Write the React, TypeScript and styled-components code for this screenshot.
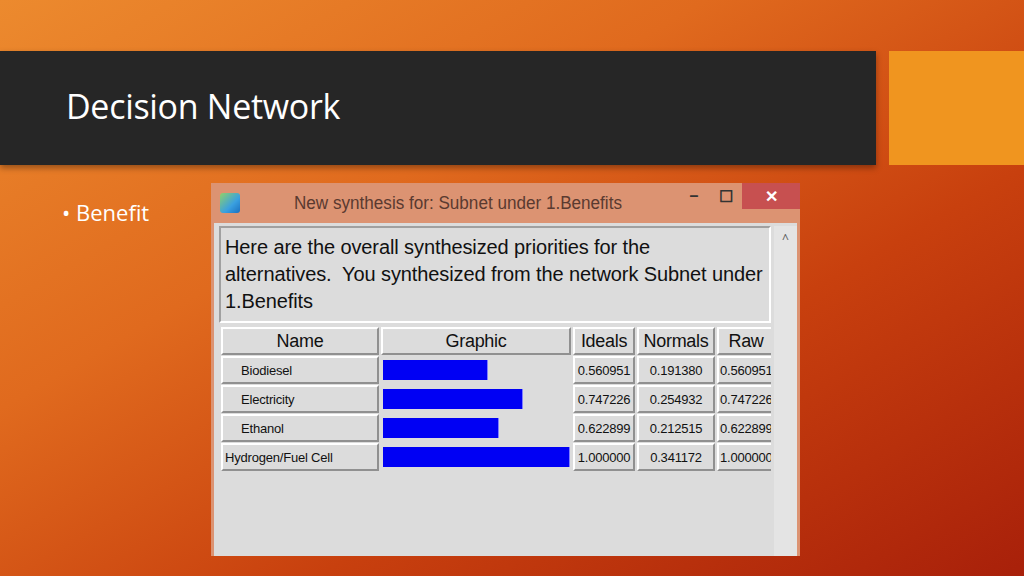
import React from "react";
import styled, { createGlobalStyle } from "styled-components";

const Global = createGlobalStyle`
  html, body { margin: 0; padding: 0; }
  body { font-family: "Open Sans", "Liberation Sans", sans-serif; }
`;

const Slide = styled.div`
  width: 1024px;
  height: 576px;
  overflow: hidden;
  background: linear-gradient(150deg, #ec8a2e 0%, #e06a1e 35%, #c8400e 65%, #a8200a 100%);
  display: flex;
  flex-direction: column;
  padding: 51px 0 20px;
  box-sizing: border-box;
`;

const HeaderRow = styled.div`
  display: flex;
  height: 114px;
  gap: 13px;
`;

const TitleBar = styled.div`
  width: 876px;
  background: #262626;
  display: flex;
  align-items: center;
  padding-left: 66px;
  box-sizing: border-box;
  box-shadow: 0 3px 6px rgba(0, 0, 0, 0.35);
`;

const Title = styled.h1`
  margin: 0;
  color: #ffffff;
  font-family: "Open Sans", "Liberation Sans", sans-serif;
  font-weight: normal;
  font-size: 34px;
  margin-top: -4px;
  letter-spacing: -0.3px;
`;

const Accent = styled.div`
  flex: 1;
  background: #f0951f;
`;

const Body = styled.div`
  display: flex;
  margin-top: 18px;
  flex: 1;
  min-height: 0;
`;

const Bullet = styled.div`
  width: 211px;
  padding: 14px 0 0 62px;
  box-sizing: border-box;
  color: #ffffff;
  font-family: "Open Sans", "Liberation Sans", sans-serif;
  font-size: 22px;
`;

const Win = styled.div`
  width: 589px;
  display: flex;
  flex-direction: column;
  background: #dcdcdc;
`;

const WinTitle = styled.div`
  height: 40px;
  background: #dc9372;
  display: flex;
  align-items: center;
  font-family: "Liberation Sans", sans-serif;
  font-size: 18px;
  color: #5a3a30;
`;

const AppIcon = styled.div`
  width: 20px;
  height: 20px;
  margin: 0 54px 0 9px;
  border-radius: 3px;
  background: linear-gradient(135deg, #8fd06a 0%, #3aa0e0 60%, #1a70c0 100%);
`;

const TitleText = styled.div`
  flex: 1;
  transform: scaleX(0.95);
  transform-origin: left;
`;

const Ctrl = styled.div<{ close?: boolean }>`
  width: ${(p) => (p.close ? "58px" : "32px")};
  height: 26px;
  align-self: flex-start;
  display: flex;
  align-items: center;
  justify-content: center;
  color: ${(p) => (p.close ? "#fff" : "#333")};
  background: ${(p) => (p.close ? "#c75050" : "transparent")};
  font-size: 16px;
  font-weight: bold;
`;

const Side = styled.div`
  border: 3px solid #dc9372;
  border-top: 0;
  border-bottom: 0;
  flex: 1;
  display: flex;
  padding: 3px 0 0 5px;
`;

const Main = styled.div`
  width: 552px;
  display: flex;
  flex-direction: column;
  gap: 4px;
`;

const Scroll = styled.div`
  flex: 1;
  margin-left: 3px;
  background: #e4e4e4;
  display: flex;
  justify-content: center;
  font-size: 12px;
  color: #555;
  padding-top: 4px;
`;

const Info = styled.div`
  height: 97px;
  box-sizing: border-box;
  border: 2px solid #a0a0a0;
  border-right-color: #fff;
  border-bottom-color: #fff;
  padding: 6px 4px;
  font-family: "Liberation Sans", Arial, sans-serif;
  font-size: 20px;
  line-height: 27px;
  color: #111;
  letter-spacing: -0.1px;
`;

const Grid = styled.div`
  display: grid;
  grid-template-columns: 158px 190px 62px 78px 58px;
  grid-auto-rows: 28px;
  gap: 1px 2px;
  padding-left: 2px;
  overflow: hidden;
`;

const Cell = styled.div<{ head?: boolean; align?: string; flat?: boolean }>`
  box-sizing: border-box;
  border: ${(p) => (p.flat ? "0" : "2px solid #fff")};
  border-right-color: #909090;
  border-bottom-color: #909090;
  display: flex;
  align-items: center;
  justify-content: ${(p) => p.align || "center"};
  padding-left: ${(p) => (p.align ? "18px" : "0")};
  font-family: "Liberation Sans", Arial, sans-serif;
  font-size: ${(p) => (p.head ? "18px" : "13px")};
  letter-spacing: ${(p) => (p.head ? "-0.3px" : "-0.2px")};
  color: #111;
  white-space: nowrap;
  overflow: hidden;
`;

const Bar = styled.div`
  height: 20px;
  background: #0000f4;
  border-right: 1px solid #8080ff;
`;

const rows = [
  { name: "Biodiesel", w: 104, i: "0.560951", n: "0.191380", r: "0.560951" },
  { name: "Electricity", w: 139, i: "0.747226", n: "0.254932", r: "0.747226" },
  { name: "Ethanol", w: 115, i: "0.622899", n: "0.212515", r: "0.622899" },
  { name: "Hydrogen/Fuel Cell", w: 186, i: "1.000000", n: "0.341172", r: "1.000000" },
];

export default function App() {
  return (
    <>
      <Global />
      <Slide>
        <HeaderRow>
          <TitleBar>
            <Title>Decision Network</Title>
          </TitleBar>
          <Accent />
        </HeaderRow>
        <Body>
          <Bullet>• Benefit</Bullet>
          <Win>
            <WinTitle>
              <AppIcon />
              <TitleText>New synthesis for: Subnet under 1.Benefits</TitleText>
              <Ctrl>–</Ctrl>
              <Ctrl>☐</Ctrl>
              <Ctrl close>✕</Ctrl>
            </WinTitle>
            <Side>
              <Main>
                <Info>
                  Here are the overall synthesized priorities for the alternatives.&nbsp; You synthesized from
                  the network Subnet under 1.Benefits
                </Info>
                <Grid>
                  <Cell head>Name</Cell>
                  <Cell head>Graphic</Cell>
                  <Cell head>Ideals</Cell>
                  <Cell head>Normals</Cell>
                  <Cell head>Raw</Cell>
                  {rows.map((r, k) => (
                    <React.Fragment key={r.name}>
                      <Cell align="flex-start" style={k === 3 ? { paddingLeft: 2 } : undefined}>
                        {r.name}
                      </Cell>
                      <Cell flat align="flex-start" style={{ paddingLeft: 2 }}>
                        <Bar style={{ width: r.w }} />
                      </Cell>
                      <Cell>{r.i}</Cell>
                      <Cell>{r.n}</Cell>
                      <Cell align="flex-start" style={{ paddingLeft: 1 }}>{r.r}</Cell>
                    </React.Fragment>
                  ))}
                </Grid>
              </Main>
              <Scroll>^</Scroll>
            </Side>
          </Win>
        </Body>
      </Slide>
    </>
  );
}
